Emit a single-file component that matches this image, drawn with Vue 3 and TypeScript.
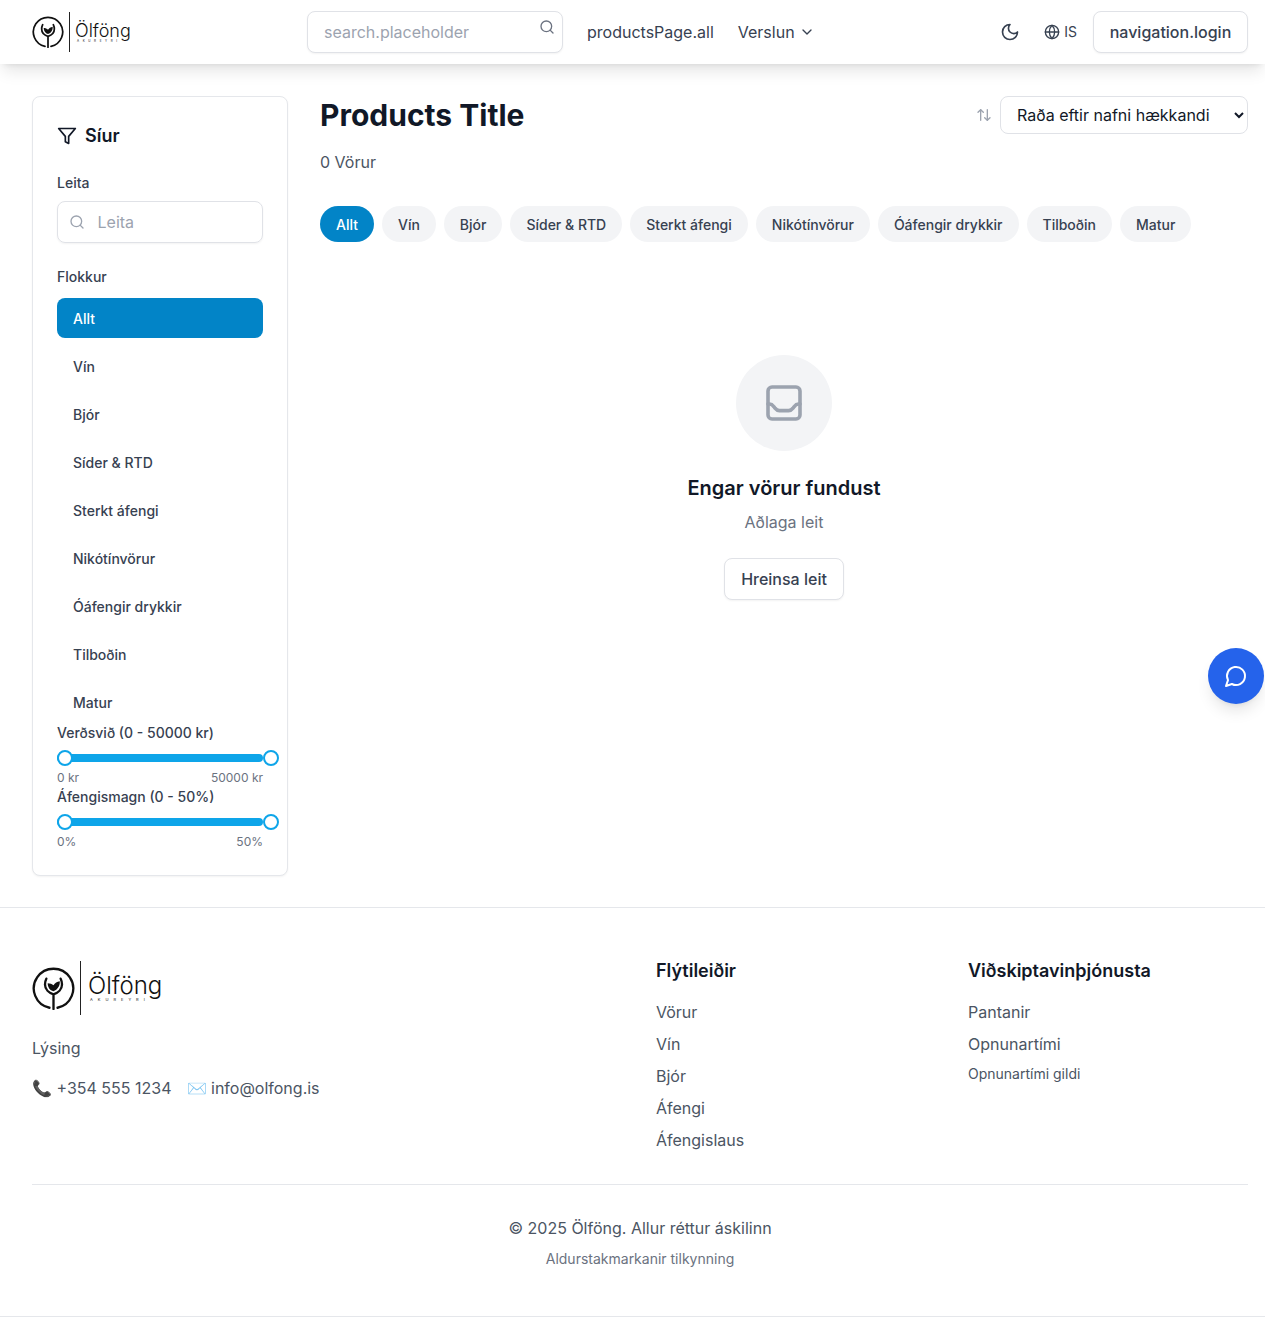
<script setup lang="ts">
const categories = ['Allt', 'Vín', 'Bjór', 'Síder & RTD', 'Sterkt áfengi', 'Nikótínvörur', 'Óáfengir drykkir', 'Tilboðin', 'Matur']
const navLinks = ['Vörur', 'Vín', 'Bjór', 'Áfengi', 'Áfengislaus']

const ranges = [
  { label: 'Verðsvið (0 - 50000 kr)', min: '0 kr', max: '50000 kr' },
  { label: 'Áfengismagn (0 - 50%)', min: '0%', max: '50%' },
]
</script>

<template>
  <div class="page">
    <header class="topbar">
      <a class="logo logo-small">
        <svg class="emblem" viewBox="0 0 48 48" fill="none" stroke="#111" stroke-width="2.6" stroke-linecap="round">
          <path d="M19.5 45.5A22 22 0 1 1 28.5 45.5" />
          <path d="M24 47V30.5C19 29 14.5 25 14.5 19.5C14.5 17 15 15 16 13M24 30.5C29 29 33.500 25 33.500 19.5C33.500 17 33 15 32 13" />
          <path d="M24 27c-4-1-6.500-4.500-6.500-9c2.500 0 5 1 6.500 2.500c1.500-2.500 4-4 7-4.500c.5 5-2.500 9.500-7 11z" fill="#111" stroke="none" />
        </svg>
        <span class="logo-rule"></span>
        <span class="wordmark"><b>Ölföng</b><small>AKUREYRI</small></span>
      </a>

      <div class="search">
        <input type="text" placeholder="search.placeholder" />
        <svg class="ico" viewBox="0 0 24 24" fill="none" stroke="currentColor" stroke-width="2" stroke-linecap="round">
          <circle cx="11" cy="11" r="8" /><path d="m21 21-4.3-4.3" />
        </svg>
      </div>

      <nav class="topnav">
        <a>productsPage.all</a>
        <a class="shop">
          Verslun
          <svg viewBox="0 0 24 24" fill="none" stroke="currentColor" stroke-width="2" stroke-linecap="round" stroke-linejoin="round">
            <path d="m6 9 6 6 6-6" />
          </svg>
        </a>
      </nav>

      <div class="top-actions">
        <svg class="moon" viewBox="0 0 24 24" fill="none" stroke="currentColor" stroke-width="2" stroke-linecap="round" stroke-linejoin="round">
          <path d="M12 3a6 6 0 0 0 9 9 9 9 0 1 1-9-9Z" />
        </svg>
        <span class="lang">
          <svg viewBox="0 0 24 24" fill="none" stroke="currentColor" stroke-width="2" stroke-linecap="round" stroke-linejoin="round">
            <circle cx="12" cy="12" r="10" /><path d="M12 2a14.5 14.5 0 0 0 0 20 14.5 14.5 0 0 0 0-20" /><path d="M2 12h20" />
          </svg>
          IS
        </span>
        <button class="btn-outline login">navigation.login</button>
      </div>
    </header>

    <main class="content">
      <aside class="filters">
        <h2>
          <svg viewBox="0 0 24 24" fill="none" stroke="currentColor" stroke-width="2" stroke-linecap="round" stroke-linejoin="round">
            <path d="M22 3H2l8 9.46V19l4 2v-8.54L22 3Z" />
          </svg>
          Síur
        </h2>

        <label class="field-label">Leita</label>
        <div class="filter-search">
          <svg viewBox="0 0 24 24" fill="none" stroke="currentColor" stroke-width="2" stroke-linecap="round">
            <circle cx="11" cy="11" r="8" /><path d="m21 21-4.3-4.3" />
          </svg>
          <input type="text" placeholder="Leita" />
        </div>

        <label class="field-label cat-label">Flokkur</label>
        <ul class="cat-list">
          <li v-for="(c, i) in categories" :key="c" :class="{ active: i === 0 }">{{ c }}</li>
        </ul>

        <div v-for="r in ranges" :key="r.label" class="range">
          <div class="range-label">{{ r.label }}</div>
          <div class="track">
            <span class="thumb left"></span>
            <span class="thumb right"></span>
          </div>
          <div class="range-values"><span>{{ r.min }}</span><span>{{ r.max }}</span></div>
        </div>
      </aside>

      <section class="results">
        <div class="results-head">
          <h1>Products Title</h1>
          <div class="sort">
            <svg viewBox="0 0 24 24" fill="none" stroke="currentColor" stroke-width="2" stroke-linecap="round" stroke-linejoin="round">
              <path d="m21 16-4 4-4-4" /><path d="M17 20V4" /><path d="m3 8 4-4 4 4" /><path d="M7 4v16" />
            </svg>
            <select>
              <option>Raða eftir nafni hækkandi</option>
            </select>
          </div>
        </div>
        <p class="count">0 Vörur</p>

        <div class="pills">
          <button v-for="(c, i) in categories" :key="c" class="pill" :class="{ active: i === 0 }">{{ c }}</button>
        </div>

        <div class="empty">
          <div class="empty-icon">
            <svg viewBox="0 0 24 24" fill="none" stroke="currentColor" stroke-width="1.8" stroke-linecap="round" stroke-linejoin="round">
              <rect x="4" y="4" width="16" height="16" rx="2" />
              <path d="M4 12.500h.8c1 0 1.500.5 2.200 1.400l.5.7c.6.8 1.200 1.200 2.200 1.200h4.600c1 0 1.600-.4 2.200-1.200l.5-.7c.7-.9 1.200-1.400 2.200-1.400h.8" />
            </svg>
          </div>
          <h3>Engar vörur fundust</h3>
          <p>Aðlaga leit</p>
          <button class="btn-outline">Hreinsa leit</button>
        </div>
      </section>
    </main>

    <footer class="footer">
      <div class="footer-grid">
        <div class="about">
          <a class="logo logo-large">
            <svg class="emblem" viewBox="0 0 48 48" fill="none" stroke="#111" stroke-width="2.6" stroke-linecap="round">
              <path d="M19.5 45.5A22 22 0 1 1 28.5 45.5" />
              <path d="M24 47V30.5C19 29 14.5 25 14.5 19.5C14.5 17 15 15 16 13M24 30.5C29 29 33.500 25 33.500 19.5C33.500 17 33 15 32 13" />
              <path d="M24 27c-4-1-6.500-4.500-6.500-9c2.500 0 5 1 6.500 2.500c1.500-2.500 4-4 7-4.500c.5 5-2.500 9.500-7 11z" fill="#111" stroke="none" />
            </svg>
            <span class="logo-rule"></span>
            <span class="wordmark"><b>Ölföng</b><small>AKUREYRI</small></span>
          </a>
          <p class="desc">Lýsing</p>
          <div class="contact">
            <span>📞 +354 555 1234</span>
            <span>✉️ info@olfong.is</span>
          </div>
        </div>
        <div class="foot-col">
          <h4>Flýtileiðir</h4>
          <a v-for="l in navLinks" :key="l">{{ l }}</a>
        </div>
        <div class="foot-col">
          <h4>Viðskiptavinþjónusta</h4>
          <a>Pantanir</a>
          <a>Opnunartími</a>
          <small>Opnunartími gildi</small>
        </div>
      </div>
      <div class="legal">
        <p>© 2025 Ölföng. Allur réttur áskilinn</p>
        <small>Aldurstakmarkanir tilkynning</small>
      </div>
    </footer>

    <button class="chat" aria-label="Spjall">
      <svg viewBox="0 0 24 24" fill="none" stroke="currentColor" stroke-width="2" stroke-linecap="round" stroke-linejoin="round">
        <path d="M7.9 20A9 9 0 1 0 4 16.100L2 22Z" />
      </svg>
    </button>
  </div>
</template>

<style>
html, body { margin: 0; background: #fff; }
</style>

<style scoped>
.page {
  font-family: Inter, "Liberation Sans", sans-serif;
  color: #111827;
  font-size: 16px;
  line-height: 24px;
  width: 1265px;
}
.topbar {
  height: 64px;
  padding: 0 17px 0 32px;
  display: flex;
  align-items: center;
  background: #fff;
  box-shadow: 0 10px 15px -3px rgba(0,0,0,.1), 0 4px 6px -4px rgba(0,0,0,.1);
  position: relative;
}
.logo { display: flex; align-items: center; color: #111; }
.logo-small { width: 275px; height: 40px; }
.logo-small .emblem { width: 32px; height: 32px; }
.logo-small .logo-rule { height: 40px; margin: 0 5px; }
.logo-small .wordmark b { font-size: 18px; line-height: 18px; }
.logo-small .wordmark small { font-size: 3px; line-height: 3px; letter-spacing: 3.600px; margin-left: 2px; }
.logo-large { height: 54px; }
.logo-large .emblem { width: 43px; height: 43px; }
.logo-large .logo-rule { height: 54px; margin: 0 7px 0 5px; }
.logo-large .wordmark b { font-size: 24px; line-height: 24px; }
.logo-large .wordmark small { font-size: 4px; line-height: 4px; letter-spacing: 5px; margin-left: 2px; }
.logo-rule { width: 1px; background: #222; display: block; }
.wordmark {
  font-family: Inter, sans-serif;
  display: flex;
  flex-direction: column;
}
.wordmark b { font-weight: 300; display: block; }
.wordmark small { display: block; }
.search { position: relative; width: 256px; height: 42px; }
.search input {
  width: 100%;
  height: 100%;
  box-sizing: border-box;
  padding: 0 40px 0 16px;
  border: 1px solid #e0e2e7;
  border-radius: 8px;
  font: inherit;
  outline: none;
  box-shadow: 0 1px 2px rgba(0,0,0,.05);
}
.search input::placeholder, .filter-search input::placeholder { color: #9ca3af; }
.ico {
  position: absolute;
  right: 8px;
  top: 8px;
  width: 16px;
  height: 16px;
  color: #6b7280;
}
.topnav {
  display: flex;
  align-items: center;
  gap: 24px;
  margin-left: 24px;
  color: #374151;
}
.shop { display: flex; align-items: center; gap: 4px; }
.shop svg { width: 16px; height: 16px; }
.top-actions {
  margin-left: auto;
  display: flex;
  align-items: center;
  color: #374151;
}
.moon { width: 20px; height: 20px; margin-right: 24px; }
.lang { display: flex; align-items: center; gap: 4px; font-size: 14px; margin-right: 16px; }
.lang svg { width: 16px; height: 16px; }
.btn-outline {
  height: 42px;
  padding: 0 16px;
  background: #fff;
  border: 1px solid #e0e2e7;
  border-radius: 8px;
  font: 500 16px/24px Inter, sans-serif;
  color: #374151;
  box-shadow: 0 1px 2px rgba(0,0,0,.05);
}
.login { width: 155px; padding: 0; }
.content {
  display: flex;
  gap: 32px;
  padding: 32px 17px 32px 32px;
  height: 843px;
  box-sizing: border-box;
}
.filters {
  width: 256px;
  height: 780px;
  flex: none;
  box-sizing: border-box;
  padding: 24px;
  background: #fff;
  border: 1px solid #e5e7eb;
  border-radius: 8px;
  box-shadow: 0 1px 2px rgba(0,0,0,.05);
}
.filters h2 {
  margin: 1px 0 23px;
  display: flex;
  align-items: center;
  gap: 8px;
  font-size: 18px;
  line-height: 28px;
  font-weight: 600;
}
.filters h2 svg { width: 20px; height: 20px; }
.field-label {
  display: block;
  font-size: 14px;
  line-height: 20px;
  font-weight: 500;
  color: #374151;
  margin-bottom: 8px;
}
.cat-label { margin-top: 24px; margin-bottom: 11px; }
.filter-search {
  position: relative;
  display: flex;
  align-items: center;
  height: 42px;
  box-sizing: border-box;
  border: 1px solid #e0e2e7;
  border-radius: 8px;
  color: #9ca3af;
  box-shadow: 0 1px 2px rgba(0,0,0,.05);
}
.filter-search svg { position: absolute; left: 11px; top: 12px; width: 16px; height: 16px; }
.filter-search input {
  width: 100%;
  border: 0;
  outline: none;
  padding: 0 12px 1px 39.500px;
  font: inherit;
  background: transparent;
}
.cat-list { list-style: none; margin: 0 0 1px; padding: 0; display: flex; flex-direction: column; gap: 8px; }
.cat-list li {
  height: 40px;
  line-height: 41px;
  padding: 0 16px;
  border-radius: 8px;
  font-size: 14px;
  font-weight: 500;
  color: #374151;
}
.cat-list li.active { background: #0284c7; color: #fff; }
.range { height: 64px; }
.range-label {
  font-size: 14px;
  line-height: 20px;
  font-weight: 500;
  color: #374151;
  height: 20px;
}
.track {
  position: relative;
  height: 8px;
  margin-top: 11px;
  background: #0ea5e9;
  border-radius: 4px;
}
.thumb {
  position: absolute;
  top: -4px;
  width: 16px;
  height: 16px;
  box-sizing: border-box;
  background: #fff;
  border: 2px solid #0ea5e9;
  border-radius: 50%;
}
.thumb.left { left: 0; }
.thumb.right { left: 100%; }
.range-values {
  display: flex;
  justify-content: space-between;
  font-size: 12px;
  line-height: 16px;
  margin-top: 8px;
  color: #6b7280;
}
.results { flex: 1; min-width: 0; }
.results-head { display: flex; justify-content: space-between; align-items: center; height: 38px; }
h1 { margin: 0; font-size: 30px; line-height: 36px; font-weight: 700; }
.sort { display: flex; align-items: center; gap: 8px; color: #9ca3af; }
.sort svg { width: 16px; height: 16px; }
.sort select {
  width: 248px;
  height: 38px;
  padding: 0 12px;
  font: 400 16px Inter, sans-serif;
  color: #111827;
  background: #fff;
  border: 1px solid #e0e2e7;
  border-radius: 8px;
}
.count { margin: 16px 0 0; color: #4b5563; }
.pills { display: flex; gap: 8px; margin-top: 32px; }
.pill {
  height: 36px;
  padding: 0 16px;
  border: 0;
  border-radius: 18px;
  background: #f3f4f6;
  color: #374151;
  font: 500 14px Inter, sans-serif;
}
.pill.active { background: #0284c7; color: #fff; }
.empty { display: flex; flex-direction: column; align-items: center; margin-top: 113px; }
.empty-icon {
  width: 96px;
  height: 96px;
  border-radius: 50%;
  background: #f3f4f6;
  display: flex;
  align-items: center;
  justify-content: center;
  color: #9ca3af;
  margin-bottom: 23px;
}
.empty-icon svg { width: 48px; height: 48px; }
.empty h3 { margin: 0 0 8px; font-size: 20px; line-height: 28px; font-weight: 600; }
.empty p { margin: 0 0 24px; color: #6b7280; }
.footer {
  border-top: 1px solid #e5e7eb;
  border-bottom: 1px solid #e5e7eb;
  padding: 48px 17px 0 32px;
  height: 410px;
  box-sizing: border-box;
  color: #4b5563;
}
.footer-grid {
  display: grid;
  grid-template-columns: repeat(4, 280px);
  gap: 32px;
  height: 228px;
  border-bottom: 1px solid #e5e7eb;
}
.about { grid-column: span 2; padding-top: 5px; }
.desc { margin: 21px 0 16px; }
.contact { display: flex; gap: 15px; }
.foot-col { display: flex; flex-direction: column; gap: 8px; align-items: flex-start; }
.foot-col h4 { margin: 1px 0 7px; font-size: 18px; line-height: 28px; font-weight: 600; color: #111827; }
.foot-col small { font-size: 14px; line-height: 20px; }
.legal { text-align: center; padding-top: 31px; }
.legal p { margin: 0; }
.legal small { display: block; margin-top: 9px; font-size: 14px; line-height: 20px; color: #6b7280; }
.chat {
  position: fixed;
  left: 1208px;
  top: 648px;
  width: 56px;
  height: 56px;
  padding: 0;
  border: 0;
  border-radius: 50%;
  background: #2563eb;
  color: #fff;
  display: flex;
  align-items: center;
  justify-content: center;
  box-shadow: 0 10px 15px -3px rgba(0,0,0,.1), 0 4px 6px -4px rgba(0,0,0,.1);
}
.chat svg { width: 24px; height: 24px; }
</style>
